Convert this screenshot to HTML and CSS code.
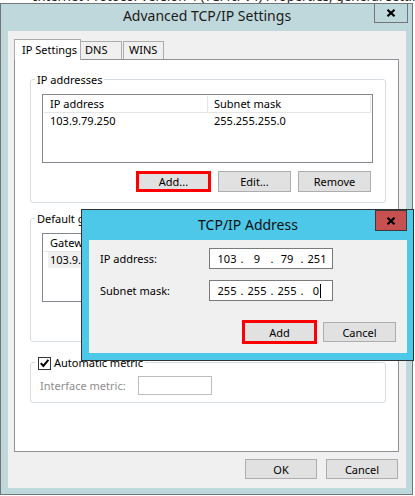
FILE: index.html
```html
<!DOCTYPE html>
<html>
<head>
  <title>Advanced TCP/IP Settings</title>
  <link rel="stylesheet" href="styles.css">
</head>
<body>
  <div class="behind"><span>Internet Protocol Version 4 (TCP/IPv4) Properties, general settings for this network</span></div>

  <div class="window">
    <div class="titlebar">
      <div class="title">Advanced TCP/IP Settings</div>
      <button class="close" type="button">
        <svg width="10" height="8" viewBox="0 0 10 8"><path d="M1.5 0.8 L8.5 7.2 M8.5 0.8 L1.5 7.2" stroke="#000" stroke-width="2.2" fill="none"/></svg>
      </button>
    </div>
    <div class="client">
      <div class="tabs">
        <div class="tab active">IP Settings</div>
        <div class="tab dns">DNS</div>
        <div class="tab wins">WINS</div>
      </div>
      <div class="panel">
        <fieldset class="group first">
          <legend>IP addresses</legend>
          <div class="group-body">
            <div class="list">
              <div class="list-head"><span>IP address</span><span>Subnet mask</span></div>
              <div class="list-row"><span>103.9.79.250</span><span>255.255.255.0</span></div>
            </div>
            <div class="actions">
              <button class="btn marked" type="button">Add...</button>
              <button class="btn" type="button">Edit...</button>
              <button class="btn" type="button">Remove</button>
            </div>
          </div>
        </fieldset>

        <fieldset class="group second">
          <legend>Default gateways:</legend>
          <div class="group-body">
            <div class="list">
              <div class="list-head"><span>Gateway</span><span>Metric</span></div>
              <div class="list-row selected"><span>103.9.79.1</span><span>Automatic</span></div>
            </div>
            <div class="actions">
              <button class="btn" type="button">Add...</button>
              <button class="btn" type="button">Edit...</button>
              <button class="btn" type="button">Remove</button>
            </div>
          </div>
        </fieldset>

        <fieldset class="group third">
          <legend>
            <span class="check">
              <svg width="11" height="11" viewBox="0 0 11 11"><path d="M1.8 5.2 L4.3 8 L9.4 1.8" stroke="#000" stroke-width="2" fill="none"/></svg>
            </span>Automatic metric
          </legend>
          <div class="metric-row">
            <span class="muted">Interface metric:</span>
            <span class="metric-field"></span>
          </div>
        </fieldset>
      </div>
      <div class="footer-buttons">
        <button class="btn wide" type="button">OK</button>
        <button class="btn wide" type="button">Cancel</button>
      </div>
    </div>
  </div>

  <div class="dialog">
    <div class="titlebar dialog-bar">
      <div class="title">TCP/IP Address</div>
      <button class="close red" type="button">
        <svg width="10" height="8" viewBox="0 0 10 8"><path d="M1.5 0.8 L8.5 7.2 M8.5 0.8 L1.5 7.2" stroke="#000" stroke-width="2.2" fill="none"/></svg>
      </button>
    </div>
    <div class="dialog-body">
      <div class="field-row">
        <span>IP address:</span>
        <div class="ip">
          <span class="octet">103</span><span class="dot">.</span><span class="octet">9</span><span class="dot">.</span><span class="octet">79</span><span class="dot">.</span><span class="octet">251</span>
        </div>
      </div>
      <div class="field-row">
        <span>Subnet mask:</span>
        <div class="ip">
          <span class="octet">255</span><span class="dot">.</span><span class="octet">255</span><span class="dot">.</span><span class="octet">255</span><span class="dot">.</span><span class="octet">0<span class="caret"></span></span>
        </div>
      </div>
      <div class="dialog-actions">
        <button class="btn marked tall" type="button">Add</button>
        <button class="btn" type="button">Cancel</button>
      </div>
    </div>
  </div>
</body>
</html>
```

FILE: styles.css
```css
/* Windows 8 style dialogs */
body {
  margin: 0;
  width: 415px;
  height: 496px;
  overflow: hidden;
  position: relative;
  background-color: #fff;
  font-family: "Noto Sans", "Open Sans", sans-serif;
  font-size: 11px;
  color: #000;
}

button {
  font-family: inherit;
  font-size: inherit;
  color: inherit;
  padding: 0;
  cursor: default;
}

/* window peeking out from behind */
.behind {
  height: 3px;
  overflow: hidden;
  padding-left: 33px;
}

.behind span {
  display: block;
  font-size: 13px;
  line-height: 14px;
  margin-top: -11px;
  color: #222;
  white-space: nowrap;
}

.window {
  box-sizing: border-box;
  width: 413px;
  height: 492px;
  border: 1px solid #707679;
  background-color: #bfd8dc;
  padding: 0 6px 6px 7px;
  display: flex;
  flex-direction: column;
}

.titlebar {
  height: 27px;
  display: grid;
  grid-template-columns: 1fr auto 1fr;
  align-items: start;
}

.title {
  grid-column: 2;
  font-size: 14px;
  line-height: 18px;
  padding-top: 3px;
  color: #1b1b1b;
  white-space: nowrap;
}

.close {
  grid-column: 3;
  justify-self: end;
  box-sizing: border-box;
  width: 34px;
  height: 20px;
  margin-top: -1px;
  margin-right: -2px;
  border: 1px solid #707679;
  background-color: transparent;
  display: flex;
  align-items: center;
  justify-content: center;
}

.client {
  flex-grow: 1;
  background-color: #f0f0f0;
  padding: 8px 7px 9px 6px;
  display: flex;
  flex-direction: column;
}

/* tabs */
.tabs {
  display: flex;
  align-items: flex-end;
  height: 21px;
  margin-bottom: -1px;
}

.tab {
  box-sizing: border-box;
  height: 19px;
  line-height: 16px;
  border: 1px solid #acacac;
  border-bottom: none;
  background-color: #f0f0f0;
}

.tab.active {
  position: relative;
  z-index: 1;
  height: 21px;
  width: 67px;
  line-height: 20px;
  padding-left: 7px;
  background-color: #fff;
}

.tab.dns {
  width: 41px;
  padding-left: 4px;
  border-left: none;
}

.tab.wins {
  width: 41px;
  margin-left: 1px;
  padding-left: 5px;
}

.panel {
  box-sizing: border-box;
  height: 393px;
  border: 1px solid #8f9296;
  background-color: #fff;
}

/* group boxes */
.group {
  margin: 8px 12px 0 15px;
  padding: 0;
  border: 1px solid #d5dde2;
  border-radius: 3px;
  min-width: 0;
}

.group.first {
  margin-top: 12px;
}

.group.third {
  margin-top: 13px;
}

.group legend {
  margin-left: 4px;
  padding: 0 2px;
  line-height: 15px;
}

.group-body {
  padding: 7px 12px 10px 11px;
}

.list {
  box-sizing: border-box;
  height: 69px;
  border: 1px solid #828790;
  padding: 1px;
}

.list-head,
.list-row {
  display: grid;
  grid-template-columns: 164px 163px;
}

.list-head {
  height: 17px;
  border-bottom: 1px solid #e5e5e5;
  box-sizing: border-box;
}

.list-head span {
  padding-left: 6px;
  line-height: 16px;
  border-right: 1px solid #e5e5e5;
}

.list-row span {
  padding-left: 6px;
  line-height: 16px;
}

.list-row.selected span:first-child {
  margin-left: 4px;
  padding-left: 2px;
  background-color: #f0f0f0;
}

.actions {
  display: flex;
  justify-content: flex-end;
  gap: 7px;
  margin-top: 8px;
  padding-right: 2px;
}

.btn {
  box-sizing: border-box;
  width: 73px;
  height: 21px;
  border: 1px solid #adadad;
  background-color: #e1e1e1;
}

.btn.marked {
  width: 75px;
  border: 3px solid #f00;
}

.btn.wide {
  width: 72px;
  height: 20px;
}

/* metric group */
.check {
  display: inline-block;
  box-sizing: border-box;
  width: 13px;
  height: 13px;
  margin: 0 3px 0 1px;
  border: 1px solid #333;
  background-color: #fff;
  vertical-align: -3px;
}

.check svg {
  display: block;
}

.metric-row {
  display: flex;
  align-items: center;
  padding: 6px 12px 7px 9px;
}

.muted {
  width: 98px;
  color: #8e8e8e;
}

.metric-field {
  box-sizing: border-box;
  width: 74px;
  height: 19px;
  border: 1px solid #bdbdbd;
  background-color: #fff;
}

.footer-buttons {
  display: flex;
  justify-content: flex-end;
  gap: 9px;
  margin-top: 7px;
  padding-right: 1px;
}

/* TCP/IP Address dialog */
.dialog {
  position: absolute;
  left: 81px;
  top: 209px;
  box-sizing: border-box;
  width: 333px;
  height: 152px;
  border: 1px solid #2e3436;
  background-color: #4dc8e8;
  padding: 0 6px 7px 7px;
  display: flex;
  flex-direction: column;
}

.dialog-bar {
  height: 30px;
}

.dialog-bar .title {
  padding-top: 6px;
  color: #111;
}

.close.red {
  width: 32px;
  height: 21px;
  margin: 0;
  border: 1px solid #3a3a3a;
  background-color: #c75050;
}

.dialog-body {
  flex-grow: 1;
  background-color: #f0f0f0;
  padding: 8px 11px 9px 11px;
}

.field-row {
  display: grid;
  grid-template-columns: 109px 124px;
  align-items: center;
  height: 21px;
  margin-bottom: 11px;
}

.ip {
  box-sizing: border-box;
  height: 21px;
  border: 1px solid #7a7a7a;
  background-color: #fff;
  display: flex;
  align-items: center;
  padding-left: 6px;
}

.octet {
  width: 22px;
  text-align: center;
}

.dot {
  width: 8px;
  text-align: center;
}

.caret {
  display: inline-block;
  width: 1px;
  height: 14px;
  margin-left: 1px;
  background-color: #000;
  vertical-align: -3px;
}

.dialog-actions {
  display: flex;
  justify-content: flex-end;
  align-items: center;
  gap: 6px;
  margin-top: 19px;
}

.btn.tall {
  height: 24px;
}

.dialog-actions .btn:last-child {
  height: 20px;
}
```
